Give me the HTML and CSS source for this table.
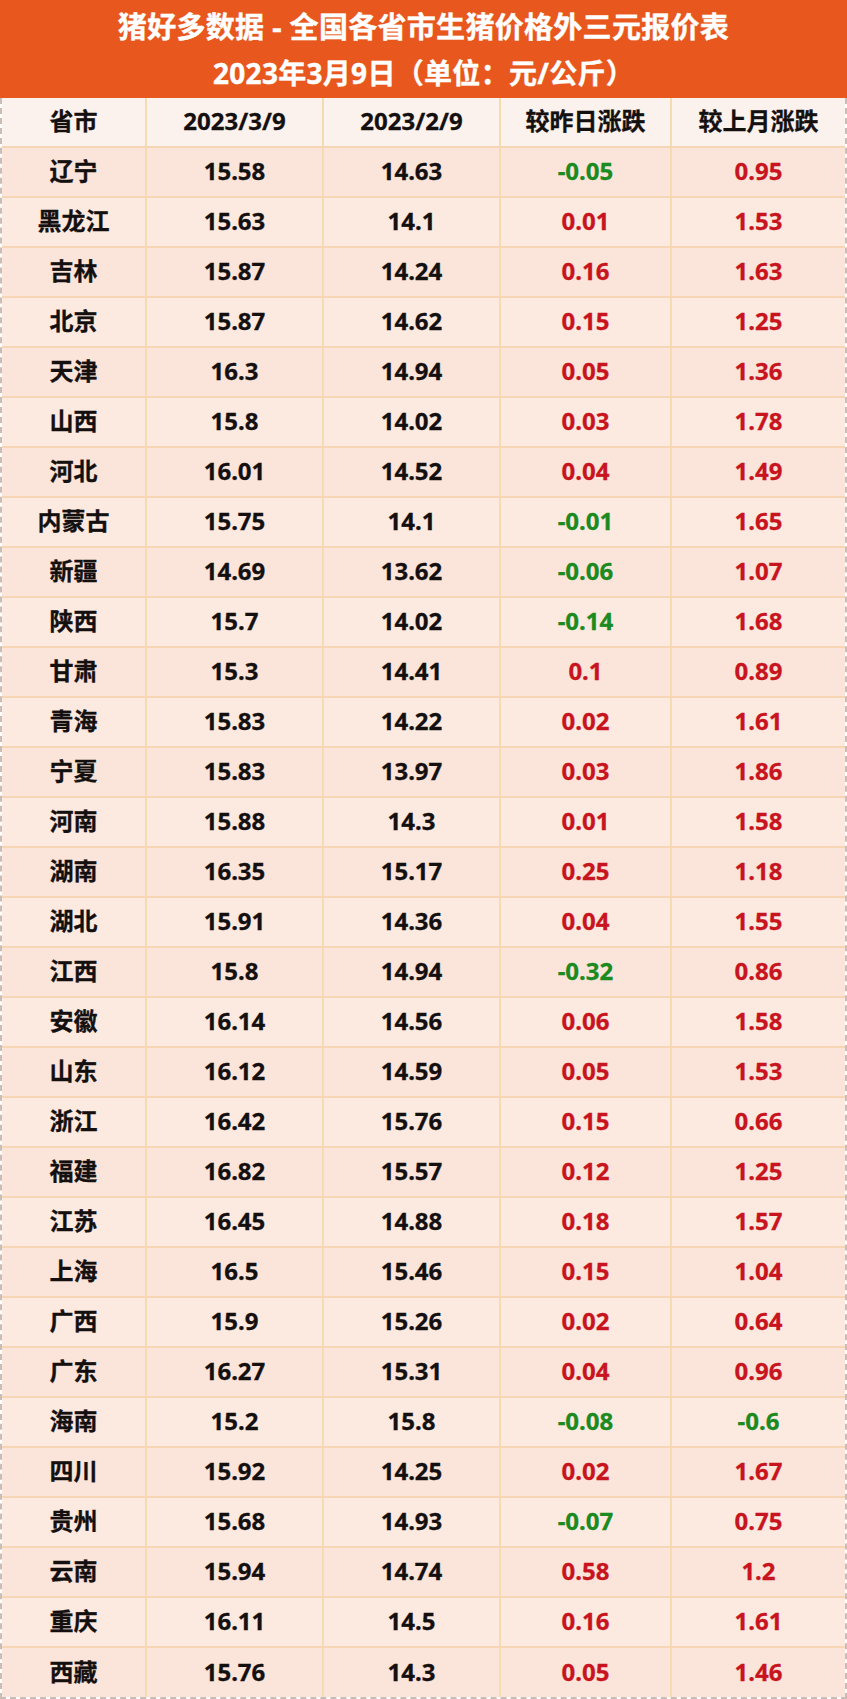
FILE: index.html
```html
<!DOCTYPE html>
<html lang="zh">
<head>
<meta charset="utf-8">
<title>猪好多数据</title>
<link rel="stylesheet" href="styles.css">
</head>
<body>
<div class="page">
  <header class="banner">
    <div class="title">猪好多数据 - 全国各省市生猪价格外三元报价表</div>
    <div class="subtitle">2023年3月9日（单位：元/公斤）</div>
  </header>
  <div class="table" id="table">
    <div class="row head"><div class="cell">省市</div><div class="cell">2023/3/9</div><div class="cell">2023/2/9</div><div class="cell">较昨日涨跌</div><div class="cell">较上月涨跌</div></div>
    <div class="row"><div class="cell">辽宁</div><div class="cell">15.58</div><div class="cell">14.63</div><div class="cell down">-0.05</div><div class="cell up">0.95</div></div>
    <div class="row"><div class="cell">黑龙江</div><div class="cell">15.63</div><div class="cell">14.1</div><div class="cell up">0.01</div><div class="cell up">1.53</div></div>
    <div class="row"><div class="cell">吉林</div><div class="cell">15.87</div><div class="cell">14.24</div><div class="cell up">0.16</div><div class="cell up">1.63</div></div>
    <div class="row"><div class="cell">北京</div><div class="cell">15.87</div><div class="cell">14.62</div><div class="cell up">0.15</div><div class="cell up">1.25</div></div>
    <div class="row"><div class="cell">天津</div><div class="cell">16.3</div><div class="cell">14.94</div><div class="cell up">0.05</div><div class="cell up">1.36</div></div>
    <div class="row"><div class="cell">山西</div><div class="cell">15.8</div><div class="cell">14.02</div><div class="cell up">0.03</div><div class="cell up">1.78</div></div>
    <div class="row"><div class="cell">河北</div><div class="cell">16.01</div><div class="cell">14.52</div><div class="cell up">0.04</div><div class="cell up">1.49</div></div>
    <div class="row"><div class="cell">内蒙古</div><div class="cell">15.75</div><div class="cell">14.1</div><div class="cell down">-0.01</div><div class="cell up">1.65</div></div>
    <div class="row"><div class="cell">新疆</div><div class="cell">14.69</div><div class="cell">13.62</div><div class="cell down">-0.06</div><div class="cell up">1.07</div></div>
    <div class="row"><div class="cell">陕西</div><div class="cell">15.7</div><div class="cell">14.02</div><div class="cell down">-0.14</div><div class="cell up">1.68</div></div>
    <div class="row"><div class="cell">甘肃</div><div class="cell">15.3</div><div class="cell">14.41</div><div class="cell up">0.1</div><div class="cell up">0.89</div></div>
    <div class="row"><div class="cell">青海</div><div class="cell">15.83</div><div class="cell">14.22</div><div class="cell up">0.02</div><div class="cell up">1.61</div></div>
    <div class="row"><div class="cell">宁夏</div><div class="cell">15.83</div><div class="cell">13.97</div><div class="cell up">0.03</div><div class="cell up">1.86</div></div>
    <div class="row"><div class="cell">河南</div><div class="cell">15.88</div><div class="cell">14.3</div><div class="cell up">0.01</div><div class="cell up">1.58</div></div>
    <div class="row"><div class="cell">湖南</div><div class="cell">16.35</div><div class="cell">15.17</div><div class="cell up">0.25</div><div class="cell up">1.18</div></div>
    <div class="row"><div class="cell">湖北</div><div class="cell">15.91</div><div class="cell">14.36</div><div class="cell up">0.04</div><div class="cell up">1.55</div></div>
    <div class="row"><div class="cell">江西</div><div class="cell">15.8</div><div class="cell">14.94</div><div class="cell down">-0.32</div><div class="cell up">0.86</div></div>
    <div class="row"><div class="cell">安徽</div><div class="cell">16.14</div><div class="cell">14.56</div><div class="cell up">0.06</div><div class="cell up">1.58</div></div>
    <div class="row"><div class="cell">山东</div><div class="cell">16.12</div><div class="cell">14.59</div><div class="cell up">0.05</div><div class="cell up">1.53</div></div>
    <div class="row"><div class="cell">浙江</div><div class="cell">16.42</div><div class="cell">15.76</div><div class="cell up">0.15</div><div class="cell up">0.66</div></div>
    <div class="row"><div class="cell">福建</div><div class="cell">16.82</div><div class="cell">15.57</div><div class="cell up">0.12</div><div class="cell up">1.25</div></div>
    <div class="row"><div class="cell">江苏</div><div class="cell">16.45</div><div class="cell">14.88</div><div class="cell up">0.18</div><div class="cell up">1.57</div></div>
    <div class="row"><div class="cell">上海</div><div class="cell">16.5</div><div class="cell">15.46</div><div class="cell up">0.15</div><div class="cell up">1.04</div></div>
    <div class="row"><div class="cell">广西</div><div class="cell">15.9</div><div class="cell">15.26</div><div class="cell up">0.02</div><div class="cell up">0.64</div></div>
    <div class="row"><div class="cell">广东</div><div class="cell">16.27</div><div class="cell">15.31</div><div class="cell up">0.04</div><div class="cell up">0.96</div></div>
    <div class="row"><div class="cell">海南</div><div class="cell">15.2</div><div class="cell">15.8</div><div class="cell down">-0.08</div><div class="cell down">-0.6</div></div>
    <div class="row"><div class="cell">四川</div><div class="cell">15.92</div><div class="cell">14.25</div><div class="cell up">0.02</div><div class="cell up">1.67</div></div>
    <div class="row"><div class="cell">贵州</div><div class="cell">15.68</div><div class="cell">14.93</div><div class="cell down">-0.07</div><div class="cell up">0.75</div></div>
    <div class="row"><div class="cell">云南</div><div class="cell">15.94</div><div class="cell">14.74</div><div class="cell up">0.58</div><div class="cell up">1.2</div></div>
    <div class="row"><div class="cell">重庆</div><div class="cell">16.11</div><div class="cell">14.5</div><div class="cell up">0.16</div><div class="cell up">1.61</div></div>
    <div class="row"><div class="cell">西藏</div><div class="cell">15.76</div><div class="cell">14.3</div><div class="cell up">0.05</div><div class="cell up">1.46</div></div>
  </div>
</div>
</body>
</html>
```
FILE: styles.css
```css
* { box-sizing: border-box; }
html, body { margin: 0; padding: 0; background: #ffffff; }
body {
  width: 847px;
  font-family: "Noto Sans", "Noto Sans CJK SC", sans-serif;
  font-weight: 700;
  color: #141010;
}
.page {
  width: 847px;
  height: 1699px;
  overflow: hidden;
}
.banner {
  height: 98px;
  background: #e8581e;
  color: #ffffff;
  display: flex;
  flex-direction: column;
  align-items: center;
  padding-top: 4px;
}
.title, .subtitle {
  font-size: 29px;
  line-height: 46px;
  height: 46px;
  letter-spacing: 0.3px;
  -webkit-text-stroke: 0.4px #ffffff;
}
.subtitle { font-size: 28px; letter-spacing: 0.3px; }
.table {
  border-left: 2px dashed #c9bdb8;
  border-right: 2px dashed #c9bdb8;
  border-bottom: 2px dashed #c9bdb8;
}
.row {
  display: grid;
  grid-template-columns: 145px 177px 177px 171px 1fr;
  height: 50px;
  background: #fbe4d9;
  border-bottom: 2px solid #f6d6b4;
}
.row:nth-child(odd) { background: #fce9e0; }
.row.head { background: #fcf2ed; height: 50px; }
.row:last-child { border-bottom: none; height: 49px; }
.cell {
  display: flex;
  align-items: center;
  justify-content: center;
  font-size: 24px;
  line-height: 1;
  border-right: 2px solid #f5dcae;
  padding-bottom: 2px;
  -webkit-text-stroke: 0.3px currentColor;
}
.cell:last-child { border-right: none; }
.up { color: #c8141e; }
.down { color: #1b8a1f; }
```
